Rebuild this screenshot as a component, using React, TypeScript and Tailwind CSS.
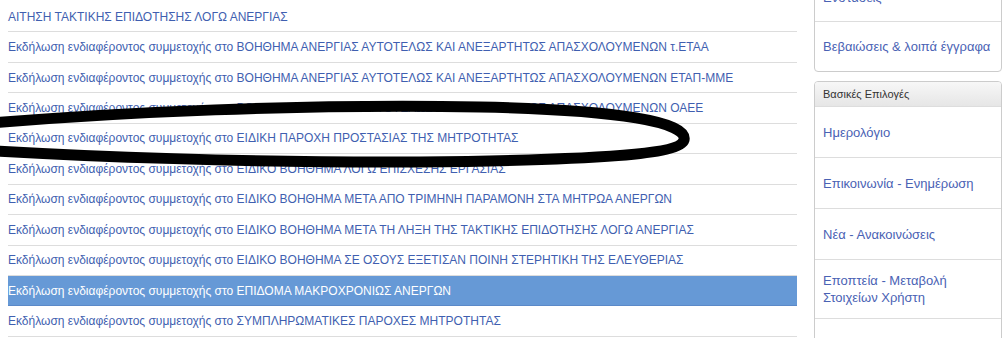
import React from "react";

const rows: string[] = [
  "ΑΙΤΗΣΗ ΤΑΚΤΙΚΗΣ ΕΠΙΔΟΤΗΣΗΣ ΛΟΓΩ ΑΝΕΡΓΙΑΣ",
  "Εκδήλωση ενδιαφέροντος συμμετοχής στο ΒΟΗΘΗΜΑ ΑΝΕΡΓΙΑΣ ΑΥΤΟΤΕΛΩΣ ΚΑΙ ΑΝΕΞΑΡΤΗΤΩΣ ΑΠΑΣΧΟΛΟΥΜΕΝΩΝ τ.ΕΤΑΑ",
  "Εκδήλωση ενδιαφέροντος συμμετοχής στο ΒΟΗΘΗΜΑ ΑΝΕΡΓΙΑΣ ΑΥΤΟΤΕΛΩΣ ΚΑΙ ΑΝΕΞΑΡΤΗΤΩΣ ΑΠΑΣΧΟΛΟΥΜΕΝΩΝ ΕΤΑΠ-ΜΜΕ",
  "Εκδήλωση ενδιαφέροντος συμμετοχής στο ΒΟΗΘΗΜΑ ΑΝΕΡΓΙΑΣ ΑΥΤΟΤΕΛΩΣ ΚΑΙ ΑΝΕΞΑΡΤΗΤΩΣ ΑΠΑΣΧΟΛΟΥΜΕΝΩΝ ΟΑΕΕ",
  "Εκδήλωση ενδιαφέροντος συμμετοχής στο ΕΙΔΙΚΗ ΠΑΡΟΧΗ ΠΡΟΣΤΑΣΙΑΣ ΤΗΣ ΜΗΤΡΟΤΗΤΑΣ",
  "Εκδήλωση ενδιαφέροντος συμμετοχής στο ΕΙΔΙΚΟ ΒΟΗΘΗΜΑ ΛΟΓΩ ΕΠΙΣΧΕΣΗΣ ΕΡΓΑΣΙΑΣ",
  "Εκδήλωση ενδιαφέροντος συμμετοχής στο ΕΙΔΙΚΟ ΒΟΗΘΗΜΑ ΜΕΤΑ ΑΠΟ ΤΡΙΜΗΝΗ ΠΑΡΑΜΟΝΗ ΣΤΑ ΜΗΤΡΩΑ ΑΝΕΡΓΩΝ",
  "Εκδήλωση ενδιαφέροντος συμμετοχής στο ΕΙΔΙΚΟ ΒΟΗΘΗΜΑ ΜΕΤΑ ΤΗ ΛΗΞΗ ΤΗΣ ΤΑΚΤΙΚΗΣ ΕΠΙΔΟΤΗΣΗΣ ΛΟΓΩ ΑΝΕΡΓΙΑΣ",
  "Εκδήλωση ενδιαφέροντος συμμετοχής στο ΕΙΔΙΚΟ ΒΟΗΘΗΜΑ ΣΕ ΟΣΟΥΣ ΕΞΕΤΙΣΑΝ ΠΟΙΝΗ ΣΤΕΡΗΤΙΚΗ ΤΗΣ ΕΛΕΥΘΕΡΙΑΣ",
  "Εκδήλωση ενδιαφέροντος συμμετοχής στο ΕΠΙΔΟΜΑ ΜΑΚΡΟΧΡΟΝΙΩΣ ΑΝΕΡΓΩΝ",
  "Εκδήλωση ενδιαφέροντος συμμετοχής στο ΣΥΜΠΛΗΡΩΜΑΤΙΚΕΣ ΠΑΡΟΧΕΣ ΜΗΤΡΟΤΗΤΑΣ",
];

const menu: string[][] = [
  ["Ημερολόγιο"],
  ["Επικοινωνία - Ενημέρωση"],
  ["Νέα - Ανακοινώσεις"],
  ["Εποπτεία - Μεταβολή", "Στοιχείων Χρήστη"],
];

export default function App() {
  return (
    <div
      className="relative w-[1003px] h-[338px] overflow-hidden bg-white"
      style={{ fontFamily: '"Liberation Sans", Arial, sans-serif' }}
    >
      <div className="flex items-start">
        {/* Left list */}
        <div className="ml-[8px] w-[789px] mt-[2px]">
          {rows.map((r, i) => {
            const active = i === 9;
            return (
              <div
                key={i}
                className={
                  active
                    ? "h-[30.44px] flex items-center border-b border-[#5b89c8] bg-[#6699d6] text-white text-[12px] whitespace-nowrap"
                    : "h-[30.44px] flex items-center border-b border-[#dddddd] text-[#3f5fb0] text-[12px] whitespace-nowrap"
                }
              >
                {r}
              </div>
            );
          })}
        </div>

        {/* Right sidebar */}
        <div className="ml-[17px] w-[188px] -mt-[26px] flex flex-col gap-[9px]">
          <div className="border border-[#cccccc] rounded-[4px] bg-white">
            <div className="h-[47px] flex items-center pl-[8px] border-b border-[#dddddd] text-[13px] text-[#4a62b4]">
              Ενστάσεις
            </div>
            <div className="h-[49px] flex items-center pl-[8px] text-[13px] text-[#4a62b4]">
              Βεβαιώσεις &amp; λοιπά έγγραφα
            </div>
          </div>
          <div className="border border-[#cccccc] rounded-[4px] bg-white overflow-hidden">
            <div className="h-[25px] flex items-center pl-[8px] border-b border-[#dddddd] bg-gradient-to-b from-[#f7f7f7] to-[#e6e6e6] text-[11px] text-[#333333]">
              Βασικές Επιλογές
            </div>
            {menu.map((m, i) => (
              <div
                key={i}
                className="min-h-[51px] flex flex-col justify-center pl-[8px] py-[12px] border-b border-[#dddddd] text-[13px] leading-[17px] text-[#4a62b4]"
              >
                {m.map((l, j) => (
                  <span key={j}>{l}</span>
                ))}
              </div>
            ))}
            <div className="h-[40px]" />
          </div>
        </div>
      </div>

      {/* Hand-drawn annotation ellipse */}
      <svg
        className="absolute left-0 top-0 pointer-events-none"
        width="1003"
        height="338"
        viewBox="0 0 1003 338"
      >
        <path
          d="M -20 124 C 120 112, 300 104, 480 107 C 620 110, 688 122, 684 140 C 680 154, 600 160, 420 162 C 250 163, 80 156, -20 150"
          fill="none"
          stroke="#000"
          strokeWidth="11"
          strokeLinecap="round"
        />
      </svg>
    </div>
  );
}
